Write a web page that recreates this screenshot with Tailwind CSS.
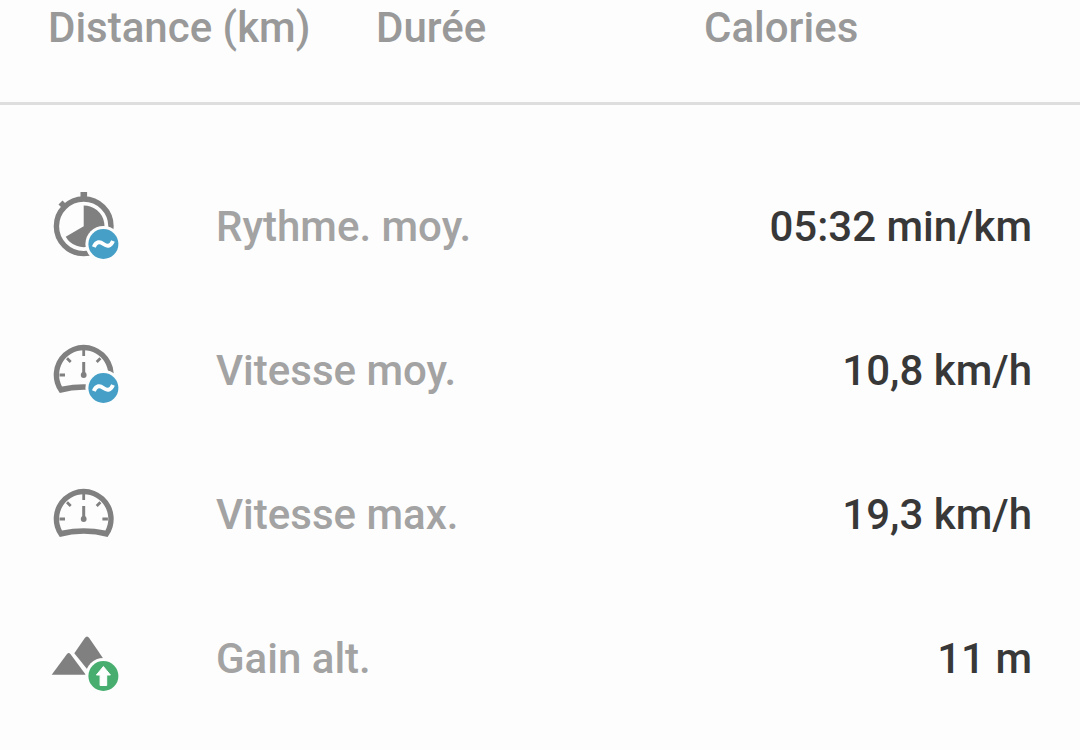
<!DOCTYPE html>
<html lang="fr">
<head>
    <meta charset="UTF-8">
    <meta name="viewport" content="width=device-width, initial-scale=1.0">
    <title>Statistiques</title>
    <script src="https://cdn.jsdelivr.net/npm/@tailwindcss/browser@4"></script>
</head>
<body class="bg-[#fdfdfd] font-['Roboto',sans-serif] text-[42px] leading-[56px] font-medium">
    <!-- Summary headings -->
    <header class="grid grid-cols-3 border-b-3 border-[#dedede] px-12 pb-[46px] text-[#999999]">
        <h2>Distance (km)</h2>
        <h2>Durée</h2>
        <h2>Calories</h2>
    </header>

    <!-- Stats -->
    <dl class="px-12 pt-[50px]">
        <div class="flex h-36 items-center gap-24">
            <svg class="size-[72px] shrink-0" viewBox="0 0 72 72" fill="none" aria-hidden="true">
                <path d="M32.500 1h6.600v7h-6.600zM10.500 13.500l4-4 4 4-4 4z" fill="#808080"/>
                <circle cx="35.700" cy="35.300" r="27.300" stroke="#808080" stroke-width="5.400"/>
                <path d="M35.700 35.300V14.500a20.800 20.800 0 1 1-18 31.200z" fill="#808080"/>
                <circle cx="55.400" cy="53" r="18" fill="#fdfdfd"/>
                <circle cx="55.400" cy="53" r="15" fill="#469fc6"/>
                <path d="M45.800 56c2.700-6 6.200-5.500 9.600-3s7 3 9.600-3" stroke="#fff" stroke-width="4"/>
            </svg>
            <dt class="text-[#a3a3a3]">Rythme. moy.</dt>
            <dd class="ml-auto text-[#383838]">05:32 min/km</dd>
        </div>
        <div class="flex h-36 items-center gap-24">
            <svg class="size-[72px] shrink-0" viewBox="0 0 72 72" fill="none" aria-hidden="true">
                <path fill-rule="evenodd" d="M11.800 58A30 30 0 1 1 59.600 58Q35.700 51.500 11.800 58zM14 51.500Q35.700 46.800 57.400 51.500A24.600 24.600 0 1 0 14 51.500z" fill="#808080"/>
                <path d="M11.500 40h5.500M54.400 40h5.500M35.700 14v7M19 23.300l3.700 3.700M52.400 23.300l-3.700 3.700" stroke="#808080" stroke-width="2.800"/>
                <path d="M35.700 27v13" stroke="#808080" stroke-width="3"/>
                <circle cx="35.700" cy="40" r="2.900" fill="#808080"/>
                <circle cx="55.400" cy="53" r="18" fill="#fdfdfd"/>
                <circle cx="55.400" cy="53" r="15" fill="#469fc6"/>
                <path d="M45.800 56c2.700-6 6.200-5.500 9.600-3s7 3 9.600-3" stroke="#fff" stroke-width="4"/>
            </svg>
            <dt class="text-[#a3a3a3]">Vitesse moy.</dt>
            <dd class="ml-auto text-[#383838]">10,8 km/h</dd>
        </div>
        <div class="flex h-36 items-center gap-24">
            <svg class="size-[72px] shrink-0" viewBox="0 0 72 72" fill="none" aria-hidden="true">
                <path fill-rule="evenodd" d="M11.800 58A30 30 0 1 1 59.600 58Q35.700 51.500 11.800 58zM14 51.500Q35.700 46.800 57.400 51.500A24.600 24.600 0 1 0 14 51.500z" fill="#808080"/>
                <path d="M11.500 40h5.500M54.400 40h5.500M35.700 14v7M19 23.300l3.700 3.700M52.400 23.300l-3.700 3.700" stroke="#808080" stroke-width="2.800"/>
                <path d="M35.700 27v13" stroke="#808080" stroke-width="3"/>
                <circle cx="35.700" cy="40" r="2.900" fill="#808080"/>
            </svg>
            <dt class="text-[#a3a3a3]">Vitesse max.</dt>
            <dd class="ml-auto text-[#383838]">19,3 km/h</dd>
        </div>
        <div class="flex h-36 items-center gap-24">
            <svg class="size-[72px] shrink-0" viewBox="0 0 72 72" fill="none" aria-hidden="true">
                <path d="M3.700 51.800L19 31.100q1.700-2.200 3.400 0L37.800 51.800z" fill="#808080"/>
                <path d="M26.300 30.300L36.800 15q2.200-3 4.400 0L59 41 39 46z" fill="#808080"/>
                <circle cx="55.400" cy="53" r="18" fill="#fdfdfd"/>
                <circle cx="55.400" cy="53" r="15" fill="#47ae70"/>
                <path d="M55.400 43.500l7 8.500h-3.700v10.500h-6.600V52h-3.700z" fill="#fff" stroke="#fff" stroke-linejoin="round"/>
            </svg>
            <dt class="text-[#a3a3a3]">Gain alt.</dt>
            <dd class="ml-auto text-[#383838]">11 m</dd>
        </div>
    </dl>
</body>
</html>
